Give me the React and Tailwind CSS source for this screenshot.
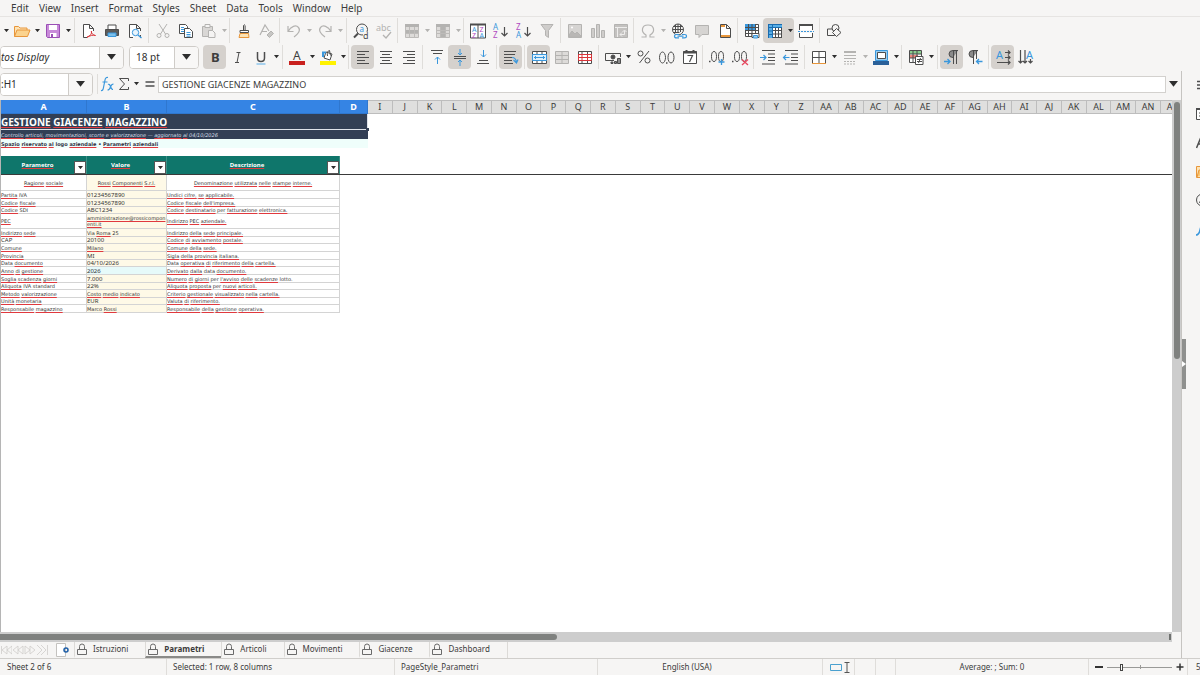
import React from "react";

const K = "#4d4d4d";
const B = "#3a97dc";
const G = "#b4b3b1";
const R = "#d9363b";
const O = "#e8963a";

function Svg({ children, s = K }) {
  return (
    <svg viewBox="0 0 16 16" className="size-4 shrink-0 overflow-visible" fill="none" stroke={s} strokeWidth="1" aria-hidden="true">
      {children}
    </svg>
  );
}

function T({ x, y, size = 8, fill = K, weight = 400, children, italic }) {
  return (
    <text x={x} y={y} fontSize={size} fill={fill} stroke="none" fontWeight={weight} fontStyle={italic ? "italic" : "normal"} fontFamily="Noto Sans, sans-serif">
      {children}
    </text>
  );
}

const lines = (rows) => rows.map(([x1, x2, y]) => `M${x1} ${y}H${x2}`).join("");

const icons = {
  open: <Svg s={O}><path fill="#fde3b5" d="M.5 13.500V3.500h4l1.500 1.500h7v2"/><path fill="#fbd38e" d="M.5 13.500 3 7h13l-2.500 6.500z"/></Svg>,
  save: <Svg s="#9a4fb5"><path fill="#c88ad9" d="M1.500 1.500h13v13h-12l-1-1z"/><path fill="#fff" stroke="none" d="M4 2h8v5H4z"/><path fill="#fff" stroke="none" d="M5 10h6.500v4H5z"/><path fill="#9a4fb5" stroke="none" d="M6 11h2v3H6z"/></Svg>,
  pdf: <Svg><path fill="#fff" d="M6 14.500H2.500V1.500h6l4 4V8M8.500 1.500v4h4"/><path stroke={R} d="M6 14c3-1 5-3 4.500-6-.8 2 1.500 4 4 4.500-2-.8-6 0-8.500 2"/></Svg>,
  print: <Svg><path fill="#fff" d="M4 6V2h8v4"/><path fill="#5b5b5b" d="M1.500 6.500h13v6h-13z"/><path fill="#7bbfea" stroke={B} d="M4 10h8v3.500H4z"/></Svg>,
  preview: <Svg><path fill="#fff" d="M6 14.500H2.500V1.500h7l4 4V8M9.500 1.500v4h4M13.500 12v2.500"/><circle cx="8.500" cy="9.500" r="3.200" stroke={B} fill="#e8f4fc"/><path stroke={B} strokeWidth="1.400" d="m11 12 3.500 3"/></Svg>,
  cut: <Svg s={G}><path d="m4 1 6.500 10M12 1 5.500 11"/><circle cx="4" cy="12.500" r="2"/><circle cx="12" cy="12.500" r="2"/></Svg>,
  copy: <Svg><path fill="#fff" d="M1.500 1.500h6l2 2v7h-8z"/><path fill="#fff" d="M6.500 5.500h5l3 3v6h-8z"/><path stroke={B} d="M3 4.500h3M3 6.500h3M3 8.500h3M8.500 9.500h4M8.500 11.500h4M8.500 13.200h4"/></Svg>,
  paste: <Svg s={G}><path fill="#d9d7d5" d="M1.500 3.500h10v10h-10z"/><path fill="#f5f4f3" d="M4 1.500h5v3H4zM7.500 7.500h4l2.500 2.500v4.500H7.500z"/></Svg>,
  brush: <Svg><path d="M7.500 7V2.500q.8-1.500 1.600 0V7"/><path fill="#fff" d="M4 7.500h8.500v2H4z"/><path stroke={O} fill="#fde3b5" d="M4 10.500h8.500l.5 4h-10z"/></Svg>,
  clear: <Svg s={G}><path strokeWidth="1.200" d="m1 12 5-10 4 6M3 8.500h5"/><path fill="#c7c6c4" d="m8 12 4-4 2.500 2.500-4 4z"/></Svg>,
  undo: <Svg s={G}><path strokeWidth="1.200" d="M2 3v5.500h5.500M2 8.500C5 3 10 1.500 12.500 4.500S12 11 8 14"/></Svg>,
  redo: <Svg s={G}><path strokeWidth="1.200" d="M14 3v5.500H8.500M14 8.500C11 3 6 1.500 3.500 4.500S4 11 8 14"/></Svg>,
  find: <Svg><circle cx="9" cy="6.500" r="5.500"/><path strokeWidth="2" d="M5 10.500 1 14.500"/><T x="6.500" y="9" size={8} fill={B}>a</T><path fill="#f6f5f4" stroke="none" d="M10 9h6v7h-6z"/><T x="10" y="16" size={9}>d</T></Svg>,
  spell: <Svg s={G}><T x="0" y="8" size={9} fill={G}>abc</T><path strokeWidth="1.300" d="m7 12 3 3 5-6"/></Svg>,
  row: <Svg s="#bdbbb9"><path fill="#dddbd9" d="M1.500 1.500h13v13h-13z"/><path fill="#b4b3b1" stroke="none" d="M1 1h14v3H1zM2 7h12v3H2z"/><path d="M1 10.500h14M5.500 4v11M10.500 4v11"/></Svg>,
  col: <Svg s="#bdbbb9"><path fill="#dddbd9" d="M1.500 1.500h13v13h-13z"/><path fill="#b4b3b1" stroke="none" d="M1 1h14v3H1zM6 4h4v10H6z"/><path d="M1 7.500h14M1 10.500h14M5.500 4v11M10.500 4v11"/></Svg>,
  sort: <Svg><path fill="#fff" d="M.5 1.500h15v13.500H.5zM8 2v13"/><path strokeWidth="2" d="M0 1.500h16"/><T x="2" y="8.500" size={7} fill={B}>A</T><T x="2" y="14.500" size={7} fill="#b04ac0">Z</T><T x="9.500" y="8.500" size={7} fill="#b04ac0">Z</T><T x="9.500" y="14.500" size={7} fill={B}>A</T></Svg>,
  asc: <Svg><T x="0" y="7" size={8} fill={B}>A</T><T x="0" y="15" size={8} fill="#b04ac0">Z</T><path strokeWidth="1.200" d="M11.500 4v9M8.500 10l3 3 3-3"/></Svg>,
  desc: <Svg><T x="0" y="7" size={8} fill="#b04ac0">Z</T><T x="0" y="15" size={8} fill={B}>A</T><path strokeWidth="1.200" d="M11.500 4v9M8.500 10l3 3 3-3"/></Svg>,
  filter: <Svg s={G}><path fill="#cfcdcb" d="M2 1.500h12l-4.500 6v7l-3-2v-5z"/></Svg>,
  image: <Svg s={G}><path fill="#d6d4d2" d="M1.500 1.500h13v13h-13z"/><path fill="#b9b7b5" d="m2 12 3-4 3 3 2-2 4 4v1H2z"/><circle cx="5" cy="4.500" r="1" fill="#fff" stroke="none"/></Svg>,
  chart: <Svg s={G}><path fill="#cfcdcb" d="M1.500 5.500h3v9h-3zM6.500 1.500h3v13h-3zM11.500 7.500h3v7h-3z"/></Svg>,
  pivot: <Svg s={G}><path fill="#c3c1bf" d="M1.500 1.500h13v13h-13z"/><path stroke="#eeedec" d="M2 4.500h12M4.500 5v9M7 11.500h4.500v-4M9 9.500l-2 2 2 2M9.500 9l2-2 2 2"/></Svg>,
  omega: <Svg s={G}><path strokeWidth="1.200" d="M1.500 14h4.500v-2C.5 9 1.500 2 8 2s7.500 7 2 10v2h4.500"/></Svg>,
  link: <Svg><circle cx="7" cy="6.500" r="5.500"/><path d="M1.500 6.500h11M2.500 3.500h9M2.500 9.500h6M7 1v9M4.500 2v8M9.500 2v7"/><path stroke={B} strokeWidth="1.200" fill="#f6f5f4" d="M8 11.500H5.500q-2 0-2 1.700t2 1.700H8M11 11.500h2.500q2 0 2 1.700t-2 1.700H11M6.500 13.200h6"/></Svg>,
  comment: <Svg s={G}><path fill="#d6d4d2" d="M1.500 2.500h13v9H8l-3 3v-3H1.500z"/></Svg>,
  header: <Svg><path fill="#fff" d="M3.500 1.500h6l4 4v9h-10zM9.500 1.500v4h4"/><path stroke={O} strokeWidth="2" d="M4 3h4M4 13h9"/></Svg>,
  printArea: <Svg><path fill="#fff" d="M1.500 1.500h13v12h-13z"/><path fill={B} stroke="none" d="M1 1h10v6H1z"/><path d="M1 4.500h13M1 7.500h13M1 10.500h13M4.500 1v13M8 1v13M11.500 1v13"/><path fill="#fff" d="M8 10.500h7v4H8z"/><path stroke={B} fill="#9bcef0" d="M9.500 12.500h4v2.500h-4z"/></Svg>,
  freeze: <Svg><path fill="#fff" d="M1.500 1.500h13v13h-13z"/><path fill="#58aee6" stroke="none" d="M1 1h4v14H1zM1 1h14v3H1z"/><path d="M5.500 4v11M8.500 4v11M11.500 4v11M5 7.500h10M5 11h10M14.500 4v11M5 14.500h10"/><path stroke="#1a6cb0" d="M1 4.500h14M5.500 1v14M1 1.500h14M1.500 1v14M1 8h4M1 11.500h4"/></Svg>,
  split: <Svg><path fill="#fff" d="M1.500 1.500h13v13h-13z"/><path strokeWidth="2" d="M1 2h14"/><path stroke="#f6f5f4" strokeWidth="3" d="M0 8.500h16"/><path stroke={B} strokeDasharray="2 1" d="M0 8.500h16"/></Svg>,
  shapes: <Svg><path fill="#f6f5f4" d="M1.500 6h7v6.500h-7z"/><circle cx="9.500" cy="5" r="3.500" fill="#f6f5f4"/><path fill="#f6f5f4" d="m10.500 5.500 4.500 4-4.500 4-4-4z"/></Svg>,
  bold: <Svg><T x="4" y="13" size={13} weight={700} fill="#3d3d3d">B</T></Svg>,
  italic: <Svg><path d="M6.500 3.500h4M5 13.500h4M9 3.500l-2 10"/></Svg>,
  underline: <Svg><path strokeWidth="1.500" d="M4.500 3v6q0 3.500 3.500 3.500T11.500 9V3"/><path stroke="#8cc4ec" strokeWidth="1.500" d="M3.500 15h9"/></Svg>,
  fontColor: <Svg><T x="4" y="10.500" size={12} fill="#3d3d3d">A</T><path stroke="#c9211e" strokeWidth="4" d="M0 14h16"/></Svg>,
  fill: <Svg><path fill="#fff" d="m6 3 6 2-2 6-6-2z"/><path d="M7.500 7q-1-5 2-5.500l1 5"/><path stroke={B} strokeWidth="2" d="M3 8V3.500h3"/><path stroke="#fff200" strokeWidth="4" d="M0 14h16"/></Svg>,
  left: <Svg><path d={lines([[2, 14, 2.5], [2, 10, 5.5], [2, 14, 8.5], [2, 10, 11.5], [2, 14, 14.5]])}/></Svg>,
  center: <Svg><path d={lines([[2, 14, 2.5], [4, 12, 5.5], [2, 14, 8.5], [4, 12, 11.5], [2, 14, 14.5]])}/></Svg>,
  right: <Svg><path d={lines([[2, 14, 2.5], [6, 14, 5.5], [2, 14, 8.5], [6, 14, 11.5], [2, 14, 14.5]])}/></Svg>,
  top: <Svg><path d="M2 1.500h12M4 4.500h9"/><path stroke={B} d="M8.500 15V8M6 10.500 8.500 8l2.500 2.500"/></Svg>,
  middle: <Svg><path d="M2 7.500h12M2 9.500h12"/><path stroke={B} d="M8 0v6M6 4l2 2 2-2M8 17v-6M6 13l2-2 2 2"/></Svg>,
  bottom: <Svg><path d="M2 14.500h12M4 11.500h9"/><path stroke={B} d="M8.500 1v7M6 5.500 8.500 8 11 5.500"/></Svg>,
  wrap: <Svg><path d={lines([[1, 13, 2.5], [1, 12, 5.5], [1, 9, 8.5], [1, 9, 11.5], [1, 10, 14.5]])}/><path stroke={B} strokeWidth="1.200" d="M9 8.500q4 0 4.500 5M10.500 11l3 3 1.500-3.500"/></Svg>,
  merge: <Svg><path fill="#fff" d="M1.500 2.500h14v12h-14z"/><path d="M1 5.500h15M1 11.500h15M6 2v3M11 2v3M6 12v3M11 12v3"/><path fill="#dff0fb" stroke={B} d="M1.500 5.500h14v6h-14zM3 8.500h11M5 7 3.500 8.500 5 10M12 7l1.500 1.500L12 10"/></Svg>,
  mergeOff: <Svg s={G}><path fill="#dddbd9" d="M1.500 2.500h13v12h-13zM1 6.500h14M1 10.500h14M8 2v12"/></Svg>,
  unmerge: <Svg><path fill="#fff" d="M1.500 2.500h13v12h-13zM5 2v3M10.500 2v3M5 12v2M10.500 12v2"/><path stroke={R} d="M1.500 5.500h13v6h-13zM1.500 8.500h13M5 5v6M10.500 5v6"/></Svg>,
  currency: <Svg><path d="M9 11.500H.5v-7h15V8"/><circle cx="8" cy="8" r="2" fill={K}/><path fill="#8b8b8b" d="M9.500 12.500h2v2h-2zM12.500 9.500h3v5h-3zM6 13h2v1.500H6z"/></Svg>,
  percent: <Svg><path d="M13 2 3.500 14"/><circle cx="4.500" cy="4.500" r="2.500"/><circle cx="11.500" cy="11.500" r="2.500"/></Svg>,
  number: <Svg><ellipse cx="3.500" cy="8.500" rx="3" ry="5.500"/><ellipse cx="12" cy="8.500" rx="3" ry="5.500"/><path strokeWidth="1.500" d="M7 14h1.500"/></Svg>,
  date: <Svg><path fill="#fff" d="M1.500 2.500h13v12h-13z"/><path strokeWidth="2" d="M1 3.500h14M4.500 1v2M11.500 1v2"/><path strokeWidth="1.200" d="M5.500 6.500h5l-3 6.500"/></Svg>,
  addDec: <Svg><ellipse cx="5" cy="7.500" rx="2.500" ry="5"/><ellipse cx="12" cy="7.500" rx="2.500" ry="5"/><path strokeWidth="1.500" d="M0 12.500h1.500"/><path stroke={B} strokeWidth="1.300" d="M12.500 10v6M9.500 13h6"/></Svg>,
  delDec: <Svg><ellipse cx="5" cy="7.500" rx="2.500" ry="5"/><ellipse cx="12" cy="7.500" rx="2.500" ry="5"/><path strokeWidth="1.500" d="M0 12.500h1.500"/><path stroke="#e8475f" strokeWidth="1.300" d="m10 10.500 6 5.500M16 10.500 10 16"/></Svg>,
  indent: <Svg><path d="M2 1.500h13M8 5h7M8 8.500h7M8 11.500h7M2 15h13"/><path stroke={B} strokeWidth="1.200" d="M0 8.500h6M3.500 6 6 8.500 3.500 11"/></Svg>,
  outdent: <Svg><path d="M2 1.500h13M8 5h7M8 8.500h7M8 11.500h7M2 15h13"/><path stroke={B} strokeWidth="1.200" d="M6.500 8.500H.5M3 6 .5 8.500 3 11"/></Svg>,
  borders: <Svg><path fill="#fff" d="M1.500 14V2.500h13V14M8 2v12M1 8.500h14"/><path stroke={O} d="M1 14.500h14"/></Svg>,
  lineStyle: <Svg s={G}><path strokeWidth="2" d="M2 3h12"/><path d="M2 6.500h12M2 9.500h12"/><path strokeDasharray="2 1" d="M2 12.500h12M2 15h12"/></Svg>,
  borderColor: <Svg><path stroke={B} fill="#9bcef0" d="M2.500 1.500h12v10h-12z"/><path fill="#fff" d="M4.500 3.500h8v6h-8z"/><path stroke="#2a6099" strokeWidth="4" d="M0 14h16"/></Svg>,
  cond: <Svg><path fill="#fff" d="M1.500 1.500h12v12h-12z"/><path fill="#8ad08f" stroke="none" d="M2 2h11v3H2z"/><path fill="#f0867c" stroke="none" d="M2 6h8v3H2z"/><path d="M1 5h13M1 9h8M5 1v12M9 1v7"/><path fill="#fff" d="M7.500 7.500h7.500v8H7.500z"/><path d="M9 10.500h5M9 12.500h5M12.500 9l-2 5"/></Svg>,
  ltr: <Svg><path fill="#8b8b8b" d="M9 8.500Q5 8.500 5 5t4-3.500h5M9.500 2v13M12.500 2v13"/><path stroke={B} strokeWidth="1.300" d="M0 12.500h6M3.500 10 6 12.500 3.500 15"/></Svg>,
  rtl: <Svg><path fill="#8b8b8b" d="M6 8.500Q2 8.500 2 5t4-3.500h5M6.500 2v13M9.500 2v8"/><path stroke={B} strokeWidth="1.300" d="M15.500 12.500h-6M12 10l-2.500 2.500L12 15"/></Svg>,
  dirH: <Svg><T x="1" y="10" size={11} fill={B}>A</T><path strokeWidth="1.200" d="M10 3.500h5M10 8.500h5M2 13.500h13M13 1.500l2 2-2 2M13 6.500l2 2-2 2M13 11.500l2 2-2 2"/></Svg>,
  dirV: <Svg><T x="8" y="10" size={11} fill={B}>A</T><path strokeWidth="1.200" d="M2.500 1v13M7 1v13M12.500 10v4M.5 12l2 2 2-2M5 12l2 2 2-2M10.500 12l2 2 2-2"/></Svg>,
};

function Caret({ muted, big }) {
  return (
    <svg viewBox="0 0 8 5" className={big ? "w-[9px] shrink-0" : "w-[5px] shrink-0"} aria-hidden="true">
      <path d="M0 0h8L4 5z" fill={muted ? "#b4b3b1" : "#2e2e2e"} />
    </svg>
  );
}

function Tool({ name, label, pressed, menu, muted }) {
  return (
    <div className={`flex h-full items-stretch rounded ${pressed ? "bg-[#d5d1cd]" : ""}`}>
      <button type="button" aria-label={label} aria-pressed={pressed ? true : undefined} className="flex w-[23px] items-center justify-center">
        {icons[name]}
      </button>
      {menu && (
        <button type="button" aria-label={`${label} options`} className="flex w-2 items-center justify-center">
          <Caret muted={muted} />
        </button>
      )}
    </div>
  );
}

function Group({ items, tight, first }) {
  return (
    <div className={`flex h-full items-center pl-0.5 ${tight ? "pr-px" : "pr-0.5"} ${first ? "" : "border-l border-[#dfddda]"}`}>
      {items.map(([name, label, opts]) => (
        <Tool key={name} name={name} label={label} {...(opts || {})} />
      ))}
    </div>
  );
}

const M = { menu: true };
const MM = { menu: true, muted: true };
const P = { pressed: true };

const standardBar = [
  { items: [["pdf", "Export as PDF"], ["print", "Print"], ["preview", "Print preview"]] },
  { tight: true, items: [["cut", "Cut"], ["copy", "Copy"], ["paste", "Paste", MM]] },
  { tight: true, items: [["brush", "Clone formatting"], ["clear", "Clear formatting"]] },
  { items: [["undo", "Undo", MM], ["redo", "Redo", MM]] },
  { items: [["find", "Find and replace"], ["spell", "Spelling"]] },
  { tight: true, items: [["row", "Row", MM], ["col", "Column", MM]] },
  { items: [["sort", "Sort"], ["asc", "Sort ascending"], ["desc", "Sort descending"], ["filter", "AutoFilter"]] },
  { tight: true, items: [["image", "Insert image"], ["chart", "Insert chart"], ["pivot", "Insert pivot table"]] },
  { tight: true, items: [["omega", "Special character", MM], ["link", "Hyperlink"], ["comment", "Comment"], ["header", "Headers and footers"]] },
  { items: [["printArea", "Print area"], ["freeze", "Freeze rows and columns", { menu: true, pressed: true }], ["split", "Split window"]] },
  { items: [["shapes", "Draw functions"]] },
];

const formatBar = [
  { items: [["bold", "Bold", P], ["italic", "Italic"], ["underline", "Underline", M]] },
  { tight: true, items: [["fontColor", "Font color", M], ["fill", "Background color", M]] },
  { items: [["left", "Align left", P], ["center", "Align center"], ["right", "Align right"]] },
  { items: [["top", "Align top"], ["middle", "Center vertically", P], ["bottom", "Align bottom"]] },
  { items: [["wrap", "Wrap text", P]] },
  { items: [["merge", "Merge and center", P], ["mergeOff", "Merge cells"], ["unmerge", "Unmerge cells"]] },
  { tight: true, items: [["currency", "Currency", M], ["percent", "Percent"], ["number", "Number"], ["date", "Date"]] },
  { items: [["addDec", "Add decimal place"], ["delDec", "Delete decimal place"]] },
  { items: [["indent", "Increase indent"], ["outdent", "Decrease indent"]] },
  { tight: true, items: [["borders", "Borders", M], ["lineStyle", "Border style", MM], ["borderColor", "Border color", M]] },
  { items: [["cond", "Conditional formatting", M]] },
  { items: [["ltr", "Left to right", P], ["rtl", "Right to left"]] },
  { items: [["dirH", "Text direction horizontal", P], ["dirV", "Text direction vertical"]] },
];

const menus = ["Edit", "View", "Insert", "Format", "Styles", "Sheet", "Data", "Tools", "Window", "Help"];
const columns = ["I", "J", "K", "L", "M", "N", "O", "P", "Q", "R", "S", "T", "U", "V", "W", "X", "Y", "Z", "AA", "AB", "AC", "AD", "AE", "AF", "AG", "AH", "AI", "AJ", "AK", "AL", "AM", "AN", "AO"];

const rows = [
  ["h-2", "Partita IVA", "01234567890", "Undici cifre, se applicabile."],
  ["h-2", "Codice fiscale", "01234567890", "Codice fiscale dell'impresa."],
  ["h-[7px]", "Codice SDI", "ABC1234", "Codice destinatario per fatturazione elettronica."],
  ["h-[15px]", "PEC", "amministrazione@rossicomponenti.it", "Indirizzo PEC aziendale."],
  ["h-2", "Indirizzo sede", "Via Roma 25", "Indirizzo della sede principale."],
  ["h-[7px]", "CAP", "20100", "Codice di avviamento postale."],
  ["h-2", "Comune", "Milano", "Comune della sede."],
  ["h-2", "Provincia", "MI", "Sigla della provincia italiana."],
  ["h-[7px]", "Data documento", "04/10/2026", "Data operativa di riferimento della cartella."],
  ["h-2", "Anno di gestione", "2026", "Derivato dalla data documento."],
  ["h-2", "Soglia scadenza giorni", "7.000", "Numero di giorni per l'avviso delle scadenze lotto."],
  ["h-[7px]", "Aliquota IVA standard", "22%", "Aliquota proposta per nuovi articoli."],
  ["h-2", "Metodo valorizzazione", "Costo medio indicato", "Criterio gestionale visualizzato nella cartella."],
  ["h-[7px]", "Unità monetaria", "EUR", "Valuta di riferimento."],
  ["h-2", "Responsabile magazzino", "Marco Rossi", "Responsabile della gestione operativa."],
];

const known = new Set(["IVA", "SDI", "CAP", "MI", "EUR", "ABC1234", "per", "Data", "data", "standard", "Via", "Marco", "logo", "lotto.", "•", "—", "e"]);

function Spell({ text }) {
  return text.split(" ").map((w, i) => (
    <React.Fragment key={i}>
      {i > 0 && " "}
      {known.has(w) || /^[\d./%]+$/.test(w) ? w : (
        <span className="underline decoration-[#e0393e] decoration-solid decoration-1 underline-offset-1 [text-decoration-skip-ink:none]">{w}</span>
      )}
    </React.Fragment>
  ));
}

const big = /^([\d./%]+|CAP|MI|EUR|ABC1234)$/;

function Cell({ text, className = "" }) {
  return (
    <td className={`border-r border-b border-[#d4d4d4] p-0 align-middle break-all ${big.test(text) ? "font-['Noto_Sans',sans-serif] text-[6px]" : "text-[5px]"} ${className}`}>
      <Spell text={text} />
    </td>
  );
}

function HeadCell({ text }) {
  return (
    <th scope="col" className="border-r border-[#3d9086] bg-[#0f766b] p-0 font-['Noto_Sans',sans-serif] text-[6px] text-white">
      <div className="flex h-[18px] items-end">
        <span className="flex-1 self-center text-center"><Spell text={text} /></span>
        <button type="button" aria-label={`Filter ${text}`} className="flex h-[13px] w-3 shrink-0 items-center justify-center border border-[#555] bg-white">
          <Caret />
        </button>
      </div>
    </th>
  );
}

function Sheet() {
  return (
    <table className="w-[calc(100%+14px)] table-fixed border-separate border-spacing-0 font-['DejaVu_Sans',sans-serif] text-[5px] leading-[6px] text-[#333]">
      <colgroup>
        <col className="w-[86px]" />
        <col className="w-20" />
        <col className="w-[173px]" />
        <col className="w-7" />
        {columns.map((c) => <col key={c} />)}
      </colgroup>
      <thead>
        <tr className="h-3.5 font-['Noto_Sans',sans-serif] text-[9px] leading-3">
          {["A", "B", "C", "D"].map((c) => (
            <th key={c} scope="col" className="border-r border-b border-[#2f77cf] bg-[#3584e4] p-0 font-bold text-white">{c}</th>
          ))}
          {columns.map((c) => (
            <th key={c} scope="col" className="overflow-hidden border-t border-r border-b border-[#bdbdbd] bg-[#dfdfde] p-0 font-normal text-[#3b3b3b]">{c}</th>
          ))}
        </tr>
      </thead>
      <tbody>
        <tr className="h-4">
          <td colSpan={4} className="relative bg-[#323f55] p-0 font-['Noto_Sans',sans-serif] text-[10px] leading-3 font-bold text-white">
            <Spell text="GESTIONE GIACENZE MAGAZZINO" />
            <span className="absolute inset-0 border-r border-b border-[#dfe3ea]" />
            <span className="absolute -right-px bottom-[-1px] size-[3px] bg-[#323f55]" />
          </td>
        </tr>
        <tr className="h-[9px]">
          <td colSpan={4} className="bg-[#323f55] p-0 text-[#d9dfe8] italic">
            <Spell text="Controllo articoli, movimentazioni, scorte e valorizzazione — aggiornato al 04/10/2026" />
          </td>
        </tr>
        <tr className="h-[9px]">
          <td colSpan={4} className="bg-[#effefb] p-0 font-bold text-[#334]">
            <Spell text="Spazio riservato al logo aziendale • Parametri aziendali" />
          </td>
        </tr>
        <tr className="h-2"><td colSpan={4} className="p-0" /></tr>
        <tr className="h-[18px]">
          <HeadCell text="Parametro" />
          <HeadCell text="Valore" />
          <HeadCell text="Descrizione" />
        </tr>
        <tr className="h-px"><td colSpan={4 + columns.length} className="h-px bg-[#3a3a3a] p-0 leading-[0]" /></tr>
        <tr className="h-4 text-center">
          <Cell text="Ragione sociale" />
          <Cell text="Rossi Componenti S.r.l." className="bg-[#fef9e7]" />
          <Cell text="Denominazione utilizzata nelle stampe interne." />
        </tr>
        {rows.map(([h, a, b, c]) => (
          <tr key={a} className={h}>
            <Cell text={a} />
            <Cell text={b} className={b === "2026" ? "bg-[#e6fafa]" : "bg-[#fef9e7]"} />
            <Cell text={c} />
          </tr>
        ))}
      </tbody>
    </table>
  );
}

function Lock() {
  return (
    <svg viewBox="0 0 10 12" className="h-3 w-2.5 shrink-0" fill="none" stroke="#6a6a6a" aria-hidden="true">
      <path d="M.5 6.500h9v5h-9zM2.500 6.500V3.500Q2.500 1 5 1t2.500 2.500v3" />
    </svg>
  );
}

const tabs = ["Istruzioni", "Parametri", "Articoli", "Movimenti", "Giacenze", "Dashboard"];

function Tabs() {
  return (
    <div className="flex h-4 items-stretch text-[8px] text-[#3b3b3b]">
      <div className="flex w-12 items-center" role="group" aria-label="Sheet navigation">
        {["M1.500 2v8M7 2 2 6l5 4zM12 2 7 6l5 4z", "M6 2 1 6l5 4zM11 2 6 6l5 4z", "M1 2l5 4-5 4zM6 2l5 4-5 4z", "M1 1l5 5-5 5M5 1l5 5-5 5M11.500 1v10"].map((d, i) => (
          <button key={d} type="button" aria-label={["First sheet", "Previous sheet", "Next sheet", "Last sheet"][i]} className="w-3">
            <svg viewBox="0 0 12 12" className="size-3" fill="none" stroke="#cfcdca" strokeWidth=".8" aria-hidden="true"><path d={d} /></svg>
          </button>
        ))}
      </div>
      <button type="button" aria-label="Add sheet" className="ml-2 flex w-[18px] items-center">
        <svg viewBox="0 0 14 14" className="size-3.5" fill="none" aria-hidden="true">
          <path fill="#fff" stroke="#c4c2bf" d="M.5 13.500V.5h9v13z" />
          <circle cx="10" cy="7" r="2" stroke="#1f5fa8" strokeWidth="1.500" />
        </svg>
      </button>
      <div role="tablist" aria-label="Sheets" className="flex border-r border-[#dcdad7]">
        {tabs.map((t) => {
          const on = t === "Parametri";
          return (
            <button key={t} type="button" role="tab" aria-selected={on} className={`flex items-center gap-1.5 border-b-2 border-l border-l-[#dcdad7] pr-[17px] pl-0.5 ${on ? "border-b-[#8a8a88] font-bold" : "border-b-transparent"}`}>
              <Lock />
              {t}
            </button>
          );
        })}
      </div>
    </div>
  );
}

function Status() {
  const cell = "flex shrink-0 items-center border-r border-[#dfddda]";
  return (
    <footer className="flex h-[17px] shrink-0 items-stretch overflow-hidden border-t border-[#d0cecb] text-[8px] text-[#3b3b3b]">
      <div className={`${cell} w-[167px] pl-[7px]`}>Sheet 2 of 6</div>
      <div className={`${cell} w-[228px] pl-1.5`}>Selected: 1 row, 8 columns</div>
      <div className={`${cell} w-[203px] pl-1.5`}>PageStyle_Parametri</div>
      <div className="flex w-[178px] shrink-0 items-center justify-center">English (USA)</div>
      <div className={`${cell} w-[47px]`} />
      <div className={`${cell} w-8 gap-[3px] pl-[7px]`}>
        <svg viewBox="0 0 20 12" className="h-3 w-5" fill="none" aria-hidden="true">
          <path stroke="#4aa0cf" d="M.5 3.500h11v6H.5z" />
          <path stroke="#555" d="M14.500 1.500h5M14.500 11.500h5M17 2v9" />
        </svg>
      </div>
      <div className={`${cell} w-[21px]`} />
      <div className={`${cell} w-5`} />
      <div className="flex flex-1 items-center justify-center border-r border-[#dfddda]">Average: ; Sum: 0</div>
      <div className={`${cell} w-[99px] gap-1 pl-1.5`}>
        <button type="button" aria-label="Zoom out" className="flex h-3 w-2 items-center"><span className="h-0.5 w-2 bg-[#333]" /></button>
        <div className="relative flex flex-1 items-center">
          <input type="range" aria-label="Zoom" min="0" max="100" defaultValue="21" className="h-3 w-full appearance-none bg-transparent [&::-webkit-slider-runnable-track]:h-px [&::-webkit-slider-runnable-track]:bg-[#9a9a98] [&::-webkit-slider-thumb]:-mt-[3px] [&::-webkit-slider-thumb]:h-[7px] [&::-webkit-slider-thumb]:w-[3px] [&::-webkit-slider-thumb]:appearance-none [&::-webkit-slider-thumb]:border [&::-webkit-slider-thumb]:border-[#444] [&::-webkit-slider-thumb]:bg-white" />
          <span className="absolute left-1/2 h-1 w-px bg-[#9a9a98]" />
        </div>
        <button type="button" aria-label="Zoom in" className="mr-[3px] flex size-2 items-center">
          <svg viewBox="0 0 8 8" className="size-2" stroke="#333" strokeWidth="1.500" aria-hidden="true"><path d="M4 .5v7M.5 4h7" /></svg>
        </button>
      </div>
      <div className="flex w-3 shrink-0 items-center overflow-hidden pl-2">55%</div>
    </footer>
  );
}

function Combo({ label, value, inputClass, buttonClass = "w-6" }) {
  return (
    <div className="flex h-[23px] shrink-0 overflow-hidden rounded border border-[#cfccc8] bg-white text-[10px] text-[#2e2e2e]">
      <input aria-label={label} defaultValue={value} className={`min-w-0 bg-white outline-none ${inputClass}`} />
      <button type="button" aria-label={`${label} list`} className={`flex items-center justify-center border-l border-[#cfccc8] bg-[#f8f7f6] ${buttonClass}`}>
        <Caret big />
      </button>
    </div>
  );
}

function SideRail() {
  const s = { fill: "none", stroke: K };
  return (
    <aside className="flex w-[19px] shrink-0 border-l border-[#c6c4c1]">
      <button type="button" aria-label="Hide sidebar" className="mt-[268px] flex h-[50px] w-1 shrink-0 items-center bg-[#8f908e]">
        <svg viewBox="0 0 4 6" className="h-1.5 w-1" aria-hidden="true"><path d="M0 0l4 3-4 3z" fill="#fff" /></svg>
      </button>
      <div className="flex flex-1 flex-col items-start gap-[13px] overflow-hidden pt-1.5 pl-2.5">
        <button type="button" aria-label="Sidebar settings"><svg viewBox="0 0 16 16" className="size-4" {...s} strokeWidth="1.500"><path d="M1 4.500h12M1 8h12M1 11.500h12" /></svg></button>
        <button type="button" aria-label="Properties"><svg viewBox="0 0 16 16" className="size-4" {...s}><path fill="#fff" d="M.5 2.500h14v11H.5z" /><path strokeWidth="2" d="M0 3h15" /><path d="M3 7h3M3 10h3" /></svg></button>
        <button type="button" aria-label="Styles"><svg viewBox="0 0 16 16" className="size-4" {...s}><path strokeWidth="1.500" d="M.5 13 5 2l5 11M2.500 9h7" /></svg></button>
        <button type="button" aria-label="Gallery"><svg viewBox="0 0 16 16" className="size-4" fill="#fde3b5" stroke={O}><path d="M.5 2.500h14v11H.5z" /><path fill="#fbc56e" d="M1 13l2-7h12" /></svg></button>
        <button type="button" aria-label="Navigator"><svg viewBox="0 0 16 16" className="size-4" {...s}><circle cx="6.500" cy="7" r="6" /><path d="M3.500 10l2-5 4-1" /></svg></button>
        <button type="button" aria-label="Functions"><svg viewBox="0 0 16 16" className="size-4" fill="none" stroke={B} strokeWidth="1.500"><path d="M0 13q3 0 4-5t4-6" /></svg></button>
      </div>
    </aside>
  );
}

export default function App() {
  return (
    <div className="flex h-screen flex-col overflow-hidden bg-[#f6f5f4] font-['Noto_Sans',sans-serif] text-[#3b3b3b]">
      <nav aria-label="Menu" className="flex h-[17px] shrink-0 items-center gap-2.5 border-b border-[#e6e4e2] pl-[11px] text-[10px]">
        {menus.map((m) => <button key={m} type="button">{m}</button>)}
      </nav>

      <div role="toolbar" aria-label="Standard" className="flex h-[27px] shrink-0 items-center py-px">
        <div className="flex h-full items-stretch pr-0.5 pl-0.5">
          <button type="button" aria-label="New document options" className="flex w-2 items-center justify-center"><Caret /></button>
          <Tool name="open" label="Open" menu />
          <Tool name="save" label="Save" menu />
        </div>
        {standardBar.map((g, i) => <Group key={i} {...g} />)}
      </div>

      <div role="toolbar" aria-label="Formatting" className="flex h-[27px] shrink-0 items-center pt-px pb-0.5">
        <Combo label="Font name" value="tos Display" inputClass="w-[98px] italic" />
        <div className="w-[5px] shrink-0" />
        <Combo label="Font size" value="18 pt" inputClass="w-11 pl-1.5" />
        <div className="w-0.5 shrink-0" />
        {formatBar.map((g, i) => <Group key={i} {...g} first={i === 0} />)}
      </div>

      <div className="flex min-h-0 flex-1">
        <main className="flex min-w-0 flex-1 flex-col">
          <div className="flex h-[29px] shrink-0 items-center pb-[3px]">
            <Combo label="Name box" value=":H1" inputClass="w-[67px]" />
            <div className="ml-1 flex h-5 items-center border-l border-[#dfddda] pl-px">
              <button type="button" aria-label="Function wizard" className="w-[18px]">
                <svg viewBox="0 0 14 16" className="mx-auto h-4 w-3.5 overflow-visible" fill="none" stroke={B} strokeWidth="1.200" aria-hidden="true">
                  <path d="M0 14.500q2 .5 2.500-3L4 4q.5-3 3-2.500M1.500 6h5M7 8.500q1.500-1 2.500 2t2.500 3M12.500 8q-2 0-3 3t-3 3" />
                </svg>
              </button>
              <button type="button" aria-label="Select function" className="flex w-3.5 items-center justify-center">
                <svg viewBox="0 0 10 14" className="h-3.5 w-2.5" fill="none" stroke={K} aria-hidden="true"><path d="M9.500 4V1.500h-9L5.500 7l-5 5.500h9V10" /></svg>
              </button>
              <button type="button" aria-label="Select function options" className="flex w-[11px] items-center justify-center"><Caret /></button>
              <button type="button" aria-label="Formula" className="flex w-4 items-center justify-center">
                <svg viewBox="0 0 10 8" className="h-2 w-2.5" stroke={K} strokeWidth="1.500" aria-hidden="true"><path d="M.5 2h9M.5 6h9" /></svg>
              </button>
            </div>
            <input aria-label="Formula input" defaultValue="GESTIONE GIACENZE MAGAZZINO" className="h-[17px] min-w-0 flex-1 border border-[#d3d1ce] bg-white pl-[3px] text-[9px] text-[#3b3b3b] outline-none" />
            <button type="button" aria-label="Expand formula bar" className="flex w-[15px] items-center justify-center"><Caret big /></button>
          </div>

          <div className="flex min-h-0 flex-1">
            <div className="flex min-w-0 flex-1 flex-col">
              <div className="min-h-0 flex-1 overflow-hidden border-l border-[#b5b5b5] bg-white">
                <Sheet />
              </div>
              <div className="flex h-2.5 shrink-0 items-center justify-between bg-[#cdcdcd]">
                <div className="h-1.5 w-[47.5%] rounded-r-full bg-[#7f817f]" />
                <div className="mr-px h-1.5 w-0.5 bg-[#6f716f]" />
              </div>
            </div>
            <div className="mb-2.5 w-[9px] shrink-0 bg-[#cdcdcd] px-0.5 pt-0.5">
              <div className="h-[48.5%] w-1.5 rounded-full bg-[#7f817f]" />
            </div>
          </div>
          <Tabs />
        </main>
        <SideRail />
      </div>

      <Status />
    </div>
  );
}
